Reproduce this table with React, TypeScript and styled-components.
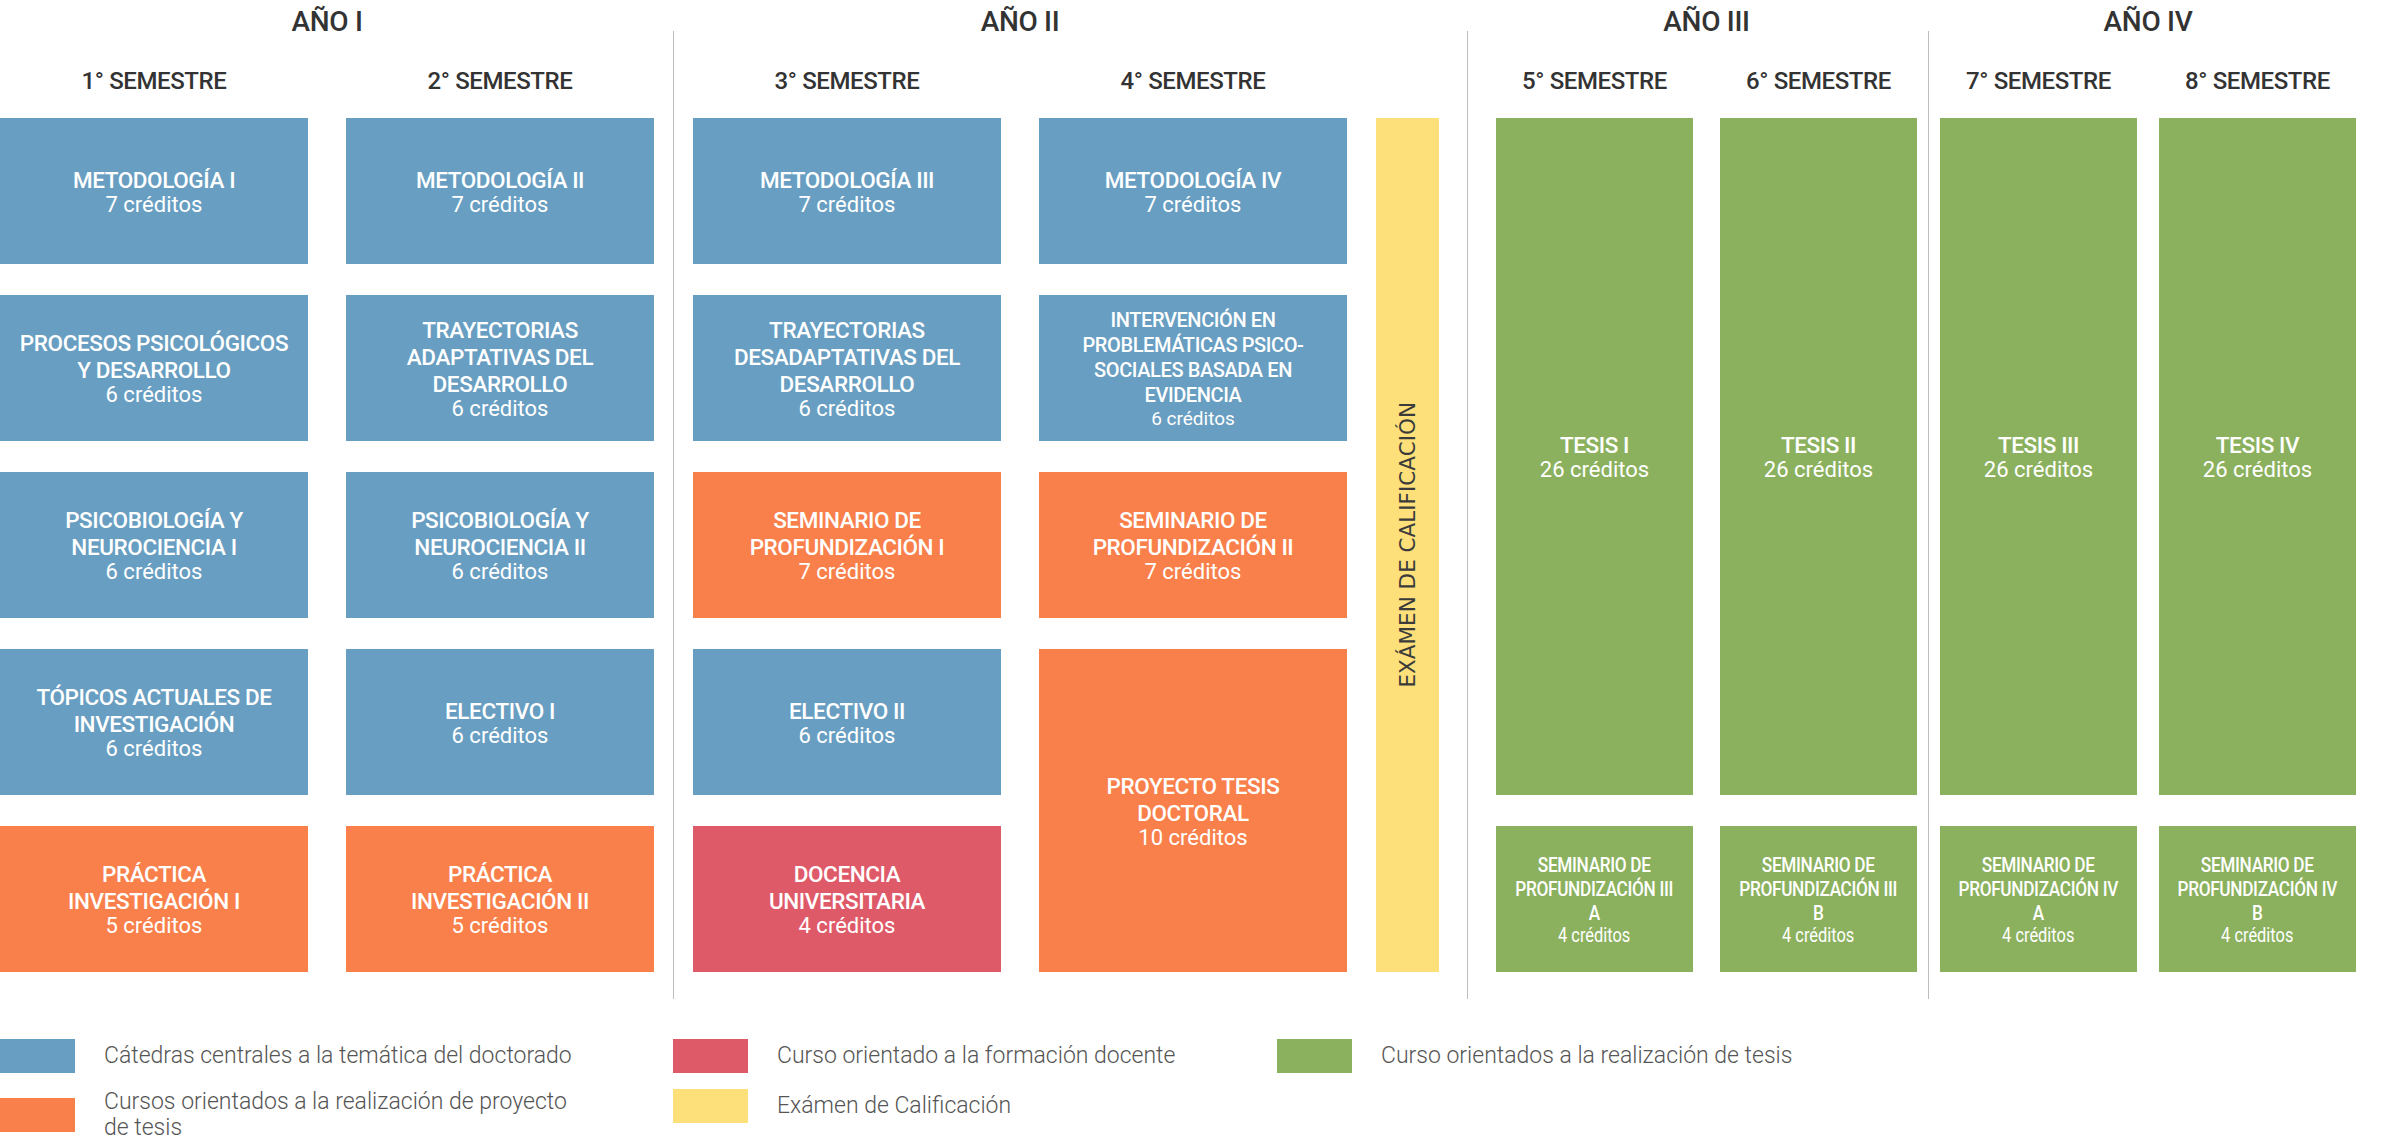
import { Fragment } from "react";
import styled, { createGlobalStyle } from "styled-components";

const GlobalStyle = createGlobalStyle`
  html, body {
    margin: 0;
    padding: 0;
    background: #ffffff;
  }
  body {
    font-family: Roboto, "Liberation Sans", Arial, sans-serif;
  }
`;

const palette = {
  blue: "#689ec1",
  orange: "#f9804b",
  red: "#df5a69",
  yellow: "#fee07a",
  green: "#8bb15e",
};

type Tone = keyof typeof palette;
type Size = "md" | "sm" | "narrow";

type Course = {
  lines: string[];
  credits: string;
  tone: Tone;
  span?: number;
  size?: Size;
};

type SemesterData = { title: string; courses: Course[] };

type YearData = {
  title: string;
  width: number;
  gap: number;
  exam?: boolean;
  divider?: number;
  semesters: SemesterData[];
};

const years: YearData[] = [
  {
    title: "AÑO I",
    width: 308,
    gap: 38,
    divider: 19,
    semesters: [
      {
        title: "1° SEMESTRE",
        courses: [
          { lines: ["METODOLOGÍA I"], credits: "7 créditos", tone: "blue" },
          { lines: ["PROCESOS PSICOLÓGICOS", "Y DESARROLLO"], credits: "6 créditos", tone: "blue" },
          { lines: ["PSICOBIOLOGÍA Y", "NEUROCIENCIA I"], credits: "6 créditos", tone: "blue" },
          { lines: ["TÓPICOS ACTUALES DE", "INVESTIGACIÓN"], credits: "6 créditos", tone: "blue" },
          { lines: ["PRÁCTICA", "INVESTIGACIÓN I"], credits: "5 créditos", tone: "orange" },
        ],
      },
      {
        title: "2° SEMESTRE",
        courses: [
          { lines: ["METODOLOGÍA II"], credits: "7 créditos", tone: "blue" },
          { lines: ["TRAYECTORIAS", "ADAPTATIVAS DEL", "DESARROLLO"], credits: "6 créditos", tone: "blue" },
          { lines: ["PSICOBIOLOGÍA Y", "NEUROCIENCIA II"], credits: "6 créditos", tone: "blue" },
          { lines: ["ELECTIVO I"], credits: "6 créditos", tone: "blue" },
          { lines: ["PRÁCTICA", "INVESTIGACIÓN II"], credits: "5 créditos", tone: "orange" },
        ],
      },
    ],
  },
  {
    title: "AÑO II",
    width: 308,
    gap: 38,
    exam: true,
    divider: 28,
    semesters: [
      {
        title: "3° SEMESTRE",
        courses: [
          { lines: ["METODOLOGÍA III"], credits: "7 créditos", tone: "blue" },
          { lines: ["TRAYECTORIAS", "DESADAPTATIVAS DEL", "DESARROLLO"], credits: "6 créditos", tone: "blue" },
          { lines: ["SEMINARIO DE", "PROFUNDIZACIÓN I"], credits: "7 créditos", tone: "orange" },
          { lines: ["ELECTIVO II"], credits: "6 créditos", tone: "blue" },
          { lines: ["DOCENCIA", "UNIVERSITARIA"], credits: "4 créditos", tone: "red" },
        ],
      },
      {
        title: "4° SEMESTRE",
        courses: [
          { lines: ["METODOLOGÍA IV"], credits: "7 créditos", tone: "blue" },
          {
            lines: ["INTERVENCIÓN EN", "PROBLEMÁTICAS PSICO-", "SOCIALES BASADA EN", "EVIDENCIA"],
            credits: "6 créditos",
            tone: "blue",
            size: "sm",
          },
          { lines: ["SEMINARIO DE", "PROFUNDIZACIÓN II"], credits: "7 créditos", tone: "orange" },
          { lines: ["PROYECTO TESIS", "DOCTORAL"], credits: "10 créditos", tone: "orange", span: 2 },
        ],
      },
    ],
  },
  {
    title: "AÑO III",
    width: 197,
    gap: 27,
    divider: 11,
    semesters: [
      {
        title: "5° SEMESTRE",
        courses: [
          { lines: ["TESIS I"], credits: "26 créditos", tone: "green", span: 4 },
          { lines: ["SEMINARIO DE", "PROFUNDIZACIÓN III", "A"], credits: "4 créditos", tone: "green", size: "narrow" },
        ],
      },
      {
        title: "6° SEMESTRE",
        courses: [
          { lines: ["TESIS II"], credits: "26 créditos", tone: "green", span: 4 },
          { lines: ["SEMINARIO DE", "PROFUNDIZACIÓN III", "B"], credits: "4 créditos", tone: "green", size: "narrow" },
        ],
      },
    ],
  },
  {
    title: "AÑO IV",
    width: 197,
    gap: 22,
    semesters: [
      {
        title: "7° SEMESTRE",
        courses: [
          { lines: ["TESIS III"], credits: "26 créditos", tone: "green", span: 4 },
          { lines: ["SEMINARIO DE", "PROFUNDIZACIÓN IV", "A"], credits: "4 créditos", tone: "green", size: "narrow" },
        ],
      },
      {
        title: "8° SEMESTRE",
        courses: [
          { lines: ["TESIS IV"], credits: "26 créditos", tone: "green", span: 4 },
          { lines: ["SEMINARIO DE", "PROFUNDIZACIÓN IV", "B"], credits: "4 créditos", tone: "green", size: "narrow" },
        ],
      },
    ],
  },
];

const legend: { tone: Tone; text: string[] }[] = [
  { tone: "blue", text: ["Cátedras centrales a la temática del doctorado"] },
  { tone: "red", text: ["Curso orientado a la formación docente"] },
  { tone: "green", text: ["Curso orientados a la realización de tesis"] },
  { tone: "orange", text: ["Cursos orientados a la realización de proyecto", "de tesis"] },
  { tone: "yellow", text: ["Exámen de Calificación"] },
];

// --- layout ---
const Page = styled.div`
  width: 2390px;
  height: 1147px;
  overflow: hidden;
`;

const Plan = styled.div`
  display: flex;
  align-items: flex-start;
`;

const YearBlock = styled.div`
  display: flex;
  align-items: flex-start;
  flex-shrink: 0;
`;

const Year = styled.section`
  display: flex;
  flex-direction: column;
`;

const YearTitle = styled.h2`
  margin: 6px 0 0;
  height: 32px;
  line-height: 32px;
  font-size: 28px;
  font-weight: 500;
  text-align: center;
  color: #333333;
  letter-spacing: -0.3px;
`;

const Semesters = styled.div<{ $gap: number }>`
  display: flex;
  gap: ${(p) => p.$gap}px;
`;

const Semester = styled.div<{ $w: number }>`
  width: ${(p) => p.$w}px;
  display: flex;
  flex-direction: column;
`;

const SemesterTitle = styled.h3`
  margin: 29px 0 23px;
  height: 28px;
  line-height: 28px;
  font-size: 24px;
  font-weight: 500;
  text-align: center;
  color: #333333;
  letter-spacing: -0.4px;
  white-space: nowrap;
`;

const Column = styled.div`
  display: grid;
  grid-template-rows: repeat(5, 146px);
  row-gap: 31px;
`;

const Card = styled.div<{ $tone: Tone; $span: number }>`
  grid-row: span ${(p) => p.$span};
  background: ${(p) => palette[p.$tone]};
  display: flex;
  align-items: center;
  justify-content: center;
  color: #ffffff;
  text-align: center;
`;

const CardText = styled.div<{ $size: Size }>`
  display: flex;
  flex-direction: column;
  align-items: center;
  transform: ${(p) => (p.$size === "narrow" ? "scaleX(0.82)" : "none")};
`;

const CardTitle = styled.div<{ $size: Size }>`
  font-size: ${(p) => (p.$size === "sm" ? 20 : p.$size === "narrow" ? 21 : 22.5)}px;
  line-height: ${(p) => (p.$size === "sm" ? 25 : p.$size === "narrow" ? 24 : 27)}px;
  font-weight: 500;
  letter-spacing: -0.4px;
  white-space: nowrap;
`;

const Credits = styled.div<{ $size: Size }>`
  font-size: ${(p) => (p.$size === "sm" ? 19 : p.$size === "narrow" ? 20 : 22)}px;
  line-height: ${(p) => (p.$size === "md" ? 22 : 21)}px;
  font-weight: 400;
  white-space: nowrap;
`;

const ExamColumn = styled.div`
  margin-left: 29px;
  padding-top: 118px;
`;

const ExamBar = styled.div`
  width: 63px;
  height: 854px;
  background: ${palette.yellow};
  display: flex;
  align-items: center;
  justify-content: center;
`;

const ExamLabel = styled.span`
  writing-mode: vertical-rl;
  transform: rotate(180deg);
  font-family: "DejaVu Sans", Verdana, sans-serif;
  font-size: 21.5px;
  color: #3b3b3b;
  white-space: nowrap;
`;

const Divider = styled.div<{ $space: number }>`
  flex-shrink: 0;
  width: 1px;
  height: 968px;
  margin: 31px ${(p) => p.$space}px 0;
  background: #bdbdbd;
`;

const Legend = styled.div`
  display: grid;
  grid-template-columns: 673px 604px 1fr;
  align-items: start;
  row-gap: 16px;
  margin-top: 40px;
`;

const LegendItem = styled.div`
  display: flex;
  align-items: center;
  gap: 29px;
`;

const Swatch = styled.span<{ $tone: Tone }>`
  flex-shrink: 0;
  width: 75px;
  height: 34px;
  background: ${(p) => palette[p.$tone]};
`;

const LegendText = styled.span`
  font-size: 23px;
  line-height: 26px;
  font-weight: 300;
  color: #555555;
`;

const CourseCard = ({ course }: { course: Course }) => {
  const size = course.size ?? "md";
  return (
    <Card $tone={course.tone} $span={course.span ?? 1}>
      <CardText $size={size}>
        {course.lines.map((line) => (
          <CardTitle key={line} $size={size}>
            {line}
          </CardTitle>
        ))}
        <Credits $size={size}>{course.credits}</Credits>
      </CardText>
    </Card>
  );
};

const App = () => (
  <>
    <GlobalStyle />
    <Page>
      <Plan>
        {years.map((year) => (
          <Fragment key={year.title}>
            <YearBlock>
              <Year>
                <YearTitle>{year.title}</YearTitle>
                <Semesters $gap={year.gap}>
                  {year.semesters.map((sem) => (
                    <Semester key={sem.title} $w={year.width}>
                      <SemesterTitle>{sem.title}</SemesterTitle>
                      <Column>
                        {sem.courses.map((c, i) => (
                          <CourseCard key={i} course={c} />
                        ))}
                      </Column>
                    </Semester>
                  ))}
                </Semesters>
              </Year>
              {year.exam && (
                <ExamColumn>
                  <ExamBar>
                    <ExamLabel>EXÁMEN DE CALIFICACIÓN</ExamLabel>
                  </ExamBar>
                </ExamColumn>
              )}
            </YearBlock>
            {year.divider !== undefined && <Divider $space={year.divider} />}
          </Fragment>
        ))}
      </Plan>
      <Legend>
        {legend.map((item) => (
          <LegendItem key={item.tone}>
            <Swatch $tone={item.tone} />
            <LegendText>
              {item.text.map((t, i) => (
                <Fragment key={t}>
                  {i > 0 && <br />}
                  {t}
                </Fragment>
              ))}
            </LegendText>
          </LegendItem>
        ))}
      </Legend>
    </Page>
  </>
);

export default App;
